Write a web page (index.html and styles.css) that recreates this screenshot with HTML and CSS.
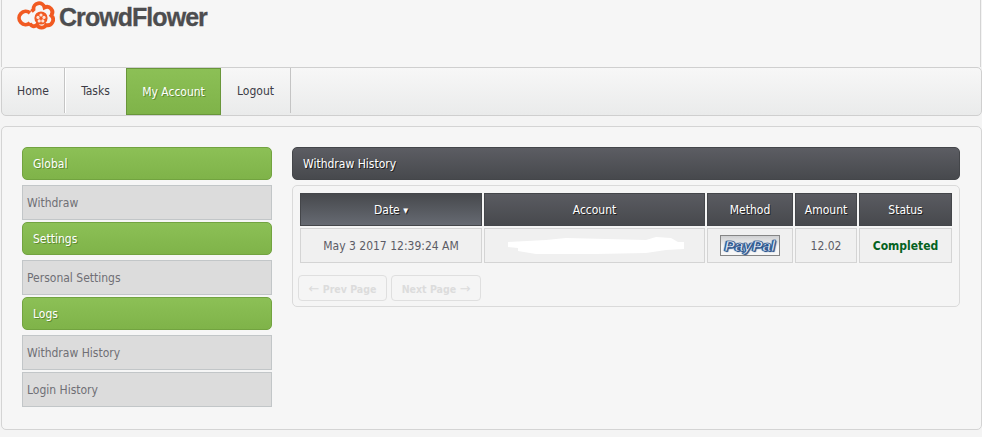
FILE: index.html
```html
<!DOCTYPE html>
<html lang="en">
<head>
<meta charset="utf-8">
<title>CrowdFlower - Withdraw History</title>
<link rel="stylesheet" href="styles.css">
</head>
<body>
<header class="masthead">
  <div class="logo">
    <svg class="logo-mark" width="42" height="30" viewBox="0 0 42 30">
      <g fill="none" stroke="#f15a22" stroke-width="3.8">
        <path d="M13 13 A6.600 6.600 0 1 0 13 23"/>
        <path d="M14.500 11.500 L16.500 9.500 A5.600 5.600 0 0 1 27.500 7.500 A5.400 5.400 0 0 1 34.300 15.500 A5.600 5.600 0 0 1 29 25 A5 5 0 0 1 20 24.800 A4 4 0 0 1 13 23"/>
      </g>
      <circle cx="24" cy="18" r="6.600" fill="#f15a22"/>
      <circle cx="24" cy="15" r="1.600" fill="#fde3d8"/>
      <circle cx="21" cy="17.400" r="1.600" fill="#fde3d8"/>
      <circle cx="27" cy="17.400" r="1.600" fill="#fde3d8"/>
      <circle cx="22.200" cy="20.900" r="1.600" fill="#fde3d8"/>
      <circle cx="25.800" cy="20.900" r="1.600" fill="#fde3d8"/>
    </svg>
    <span class="logo-text">CrowdFlower</span>
  </div>
</header>
<nav class="nav">
  <a class="nav-item nav-home">Home</a>
  <a class="nav-item nav-tasks">Tasks</a>
  <a class="nav-item nav-account">My Account</a>
  <a class="nav-item nav-logout">Logout</a>
</nav>
<main class="main">
  <aside class="side">
    <div class="side-head">Global</div>
    <a class="side-item side-item-first">Withdraw</a>
    <div class="side-head">Settings</div>
    <a class="side-item side-item-first">Personal Settings</a>
    <div class="side-head">Logs</div>
    <a class="side-item side-item-first">Withdraw History</a>
    <a class="side-item">Login History</a>
  </aside>
  <section class="content">
    <h1 class="title">Withdraw History</h1>
    <div class="panel">
      <table class="grid">
        <colgroup>
          <col class="c-date"><col class="c-account"><col class="c-method"><col class="c-amount"><col class="c-status">
        </colgroup>
        <thead>
          <tr>
            <th class="sorted">Date <span class="arrow">▼</span></th>
            <th>Account</th>
            <th>Method</th>
            <th>Amount</th>
            <th>Status</th>
          </tr>
        </thead>
        <tbody>
          <tr>
            <td>May 3 2017 12:39:24 AM</td>
            <td class="redacted">
              <svg class="scribble" width="180" height="20" viewBox="0 0 180 20">
                <path fill="#fff" d="M2 6 L40 4 L60 2 L100 3 L140 4 L150 1 L165 2 L172 6 L178 6 L178 13 L160 14 L140 17 L90 18 L30 18 L12 15 L12 12 L2 11 Z"/>
              </svg>
            </td>
            <td><span class="paypal">PayPal</span></td>
            <td>12.02</td>
            <td class="done">Completed</td>
          </tr>
        </tbody>
      </table>
      <div class="pager">
        <a class="page-btn"><span class="page-arrow">←</span> Prev Page</a>
        <a class="page-btn">Next Page <span class="page-arrow">→</span></a>
      </div>
    </div>
  </section>
</main>
</body>
</html>
```
FILE: styles.css
```css
* { box-sizing: border-box; }
html, body { margin: 0; padding: 0; }
body {
  width: 982px;
  height: 437px;
  overflow: hidden;
  background: #f4f4f4;
  font-family: "DejaVu Sans", sans-serif;
  font-size: 11px;
  color: #555;
}
.masthead {
  height: 67px;
  margin-left: 1px;
  margin-right: 1px;
  background: #f6f6f6;
  border-left: 1px solid #d4d4d4;
  border-right: 1px solid #d4d4d4;
}
.logo { display: flex; align-items: flex-start; padding-left: 15px; }
.logo-mark { flex: none; }
.logo-text {
  margin-left: 0;
  font: bold 25px/35px "Liberation Sans", sans-serif;
  color: #4d4d4f;
  letter-spacing: -0.95px;
  -webkit-text-stroke: 0.3px #4d4d4f;
}
.nav {
  display: flex;
  height: 49px;
  margin: 0 0 0 1px;
  width: 981px;
  background: linear-gradient(#f7f7f7, #eaebeb);
  border: 1px solid #cfcfcf;
  border-radius: 5px;
  padding: 0;
}
.nav-item {
  display: flex;
  align-items: center;
  justify-content: center;
  height: 45px;
  border-right: 1px solid #c4c4c4;
  color: #3c3c46;
  font-family: "DejaVu Sans Condensed", "DejaVu Sans", sans-serif;
  font-size: 12px;
}
.nav-home { width: 63px; box-shadow: 1px 0 0 #fff; }
.nav-tasks { width: 61px; border-right: 0; }
.nav-account {
  width: 95px;
  height: 47px;
  color: #fff;
  background: linear-gradient(#8cc056, #7fb349);
  border: 1px solid #69963a;
  text-shadow: 1px 1px 0 #5f8a33;
}
.nav-logout { width: 70px; }
.main {
  display: flex;
  gap: 20px;
  height: 304px;
  width: 981px;
  margin: 10px 0 0 1px;
  padding: 20px 20px 0 20px;
  background: #f6f6f6;
  border: 1px solid #d4d4d4;
  border-radius: 5px;
}
.side { width: 250px; flex: none; display: flex; flex-direction: column; }
.side-head {
  height: 33px;
  padding-left: 10px;
  line-height: 33px;
  color: #fff;
  font-family: "DejaVu Sans Condensed", "DejaVu Sans", sans-serif;
  font-size: 12px;
  background: linear-gradient(#8cc056, #7fb349);
  border: 1px solid #72a340;
  border-radius: 5px;
  text-shadow: 1px 1px 0 #5f8a33;
  margin-top: 2px;
}
.side-head:first-child { margin-top: 0; }
.side-item {
  display: block;
  height: 35px;
  padding-left: 4px;
  line-height: 35px;
  color: #6f6f75;
  font-family: "DejaVu Sans Condensed", "DejaVu Sans", sans-serif;
  font-size: 12px;
  background: #dcdcdc;
  border: 1px solid #c2c6c8;
  margin-top: 2px;
}
.side-item-first { margin-top: 5px; }
.content { width: 668px; flex: none; }
.title {
  height: 33px;
  margin: 0;
  padding-left: 10px;
  line-height: 32px;
  font-size: 12px;
  font-weight: normal;
  font-family: "DejaVu Sans Condensed", "DejaVu Sans", sans-serif;
  color: #fff;
  background: linear-gradient(#5c5d63, #47494d);
  border: 1px solid #44464a;
  border-radius: 5px;
  text-shadow: 1px 1px 0 #222;
}
.panel {
  margin-top: 5px;
  height: 122px;
  padding: 5px;
  border: 1px solid #dadada;
  border-radius: 5px;
  background: #f5f5f5;
}
.grid {
  table-layout: fixed;
  width: 656px;
  border-collapse: separate;
  border-spacing: 2px;
  font-family: "DejaVu Sans Condensed", "DejaVu Sans", sans-serif;
  font-size: 12px;
}
.c-date { width: 182px; }
.c-account { width: 221px; }
.c-method { width: 86px; }
.c-amount { width: 62px; }
.c-status { width: 93px; }
.grid th {
  height: 33px;
  padding: 0;
  font-weight: normal;
  color: #fff;
  text-shadow: 1px 1px 0 #222;
  background: linear-gradient(#5a5b61, #47494d);
  border: 1px solid #44464a;
}
.grid th.sorted { background: linear-gradient(#47494d, #666a72); }
.arrow { font-size: 7px; vertical-align: 1px; }
.grid td {
  height: 35px;
  padding: 0;
  text-align: center;
  color: #5c5c66;
  background: #f0f0f0;
  border: 1px solid #d4d4d4;
}
.grid td.done { color: #04621f; font-weight: bold; }
.scribble { display: block; margin: 0 0 0 21px; }
.paypal {
  display: inline-block;
  width: 60px;
  height: 21px;
  vertical-align: middle;
  border: 1px solid #858585;
  background: linear-gradient(#cfd0d2, #f6f6f6 55%);
  font: italic bold 15.5px/19px "Liberation Sans", sans-serif;
  color: #dfe7f4;
  -webkit-text-stroke: 0.6px #1c4a86;
  text-shadow: 0 0 1px #1c4a86, 1px 1px 1px #1c4a86, -1px 0 1px #1c4a86;
}
.pager { display: flex; gap: 4px; margin-top: 10px; }
.page-btn {
  height: 26px;
  width: 89px;
  line-height: 26px;
  text-align: center;
  color: #dcdcdc;
  font-family: "DejaVu Sans Condensed", "DejaVu Sans", sans-serif;
  font-size: 10.5px;
  font-weight: bold;
  border: 1px solid #dfdfdf;
  border-radius: 4px;
}
.page-btn + .page-btn { width: 90px; }
.page-arrow { font: normal 13px "DejaVu Sans", sans-serif; }
```
